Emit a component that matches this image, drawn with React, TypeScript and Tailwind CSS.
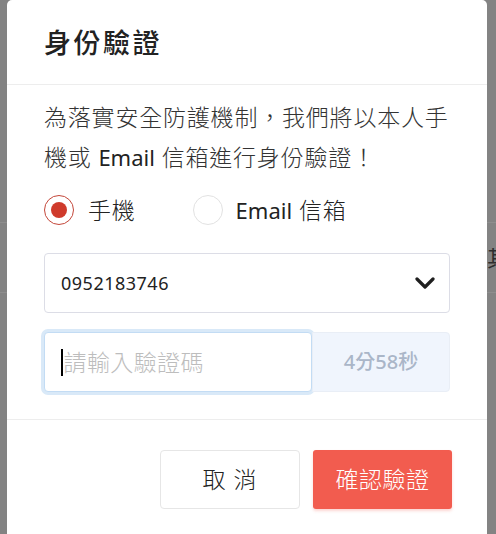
import React from "react";

export default function App() {
  const font = { fontFamily: '"Noto Sans", "Noto Sans CJK TC", sans-serif' };
  return (
    <div className="relative w-[496px] h-[534px] overflow-hidden bg-[#838383]" style={font}>
      {/* page behind the overlay */}
      <div className="pt-[222px]">
        <div className="h-[71px] border-y border-[#8e8e8e] flex items-center pl-[487px] text-[22px] text-[#2e2e2e] whitespace-nowrap">
          其他
        </div>
      </div>

      {/* modal */}
      <div className="absolute left-[7px] top-0 w-[480px] h-[560px] bg-white rounded-t-[5px] flex flex-col">
        <div className="h-[85px] px-[37px] flex items-center border-b border-[#ededed]">
          <h2 className="text-[27px] font-medium tracking-[2.5px] text-[#222] leading-none">身份驗證</h2>
        </div>

        <div className="px-[37px] pt-[12px] pb-[27px] border-b border-[#ededed]">
          <p className="text-[23px] font-light leading-[40px] tracking-[0.8px] text-[#333]">
            為落實安全防護機制，我們將以本人手
            <br />
            機或 <span className="text-[22px] font-normal tracking-normal text-[#222]">Email</span> 信箱進行身份驗證！
          </p>

          <div className="mt-[18px] flex items-center h-[30px]">
            <div className="flex items-center">
              <span className="w-[30px] h-[30px] rounded-full border border-[#c4473a] flex items-center justify-center">
                <span className="w-[16px] h-[16px] rounded-full bg-[#cf3b2c]" />
              </span>
              <span className="ml-[14px] text-[23px] font-light tracking-[0.8px] text-[#222]">手機</span>
            </div>
            <div className="flex items-center ml-[57px]">
              <span className="w-[30px] h-[30px] rounded-full border border-[#e2e2e2]" />
              <span className="ml-[13px] text-[23px] font-light tracking-[0.8px] text-[#222]">
                <span className="text-[22px] font-normal tracking-normal">Email</span> 信箱
              </span>
            </div>
          </div>

          <div className="mt-[28px] h-[60px] border border-[#dcdde6] rounded-[4px] flex items-center justify-between pl-[16px] pr-[14px]">
            <span className="text-[18px] tracking-[0.5px] text-[#222]">0952183746</span>
            <svg width="20" height="12" viewBox="0 0 20 12" fill="none">
              <polyline points="2,2 10,10 18,2" stroke="#1f1f1f" strokeWidth="3.2" strokeLinecap="round" strokeLinejoin="round" />
            </svg>
          </div>

          <div className="mt-[19px] h-[60px] flex">
            <div className="w-[268px] h-full rounded-[4px] border border-[#c3dcf4] shadow-[0_0_0_3px_#d9e9f8] bg-white flex items-center pl-[16px]">
              <span className="w-[1.5px] h-[27px] bg-black" />
              <span className="ml-[1px] text-[23px] font-light tracking-[0.4px] text-[#bdbdbd]">請輸入驗證碼</span>
            </div>
            <div className="flex-1 h-full bg-[#f0f5fd] border border-[#e9eef6] rounded-r-[4px] flex items-center justify-center">
              <span className="text-[20px] font-medium text-[#aab6c8]">4分58秒</span>
            </div>
          </div>
        </div>

        <div className="pt-[30px] px-[35px] flex justify-end gap-[13px]">
          <button className="w-[140px] h-[59px] rounded-[4px] border border-[#e6e6e6] bg-white text-[23px] font-light tracking-[1px] text-[#222] flex items-center justify-center">
            取 消
          </button>
          <button className="w-[139px] h-[59px] rounded-[3px] bg-[#f25c4f] shadow-[0_2px_3px_rgba(242,92,79,0.25)] text-[23px] font-light tracking-[0.5px] text-white flex items-center justify-center">
            確認驗證
          </button>
        </div>
      </div>
    </div>
  );
}
